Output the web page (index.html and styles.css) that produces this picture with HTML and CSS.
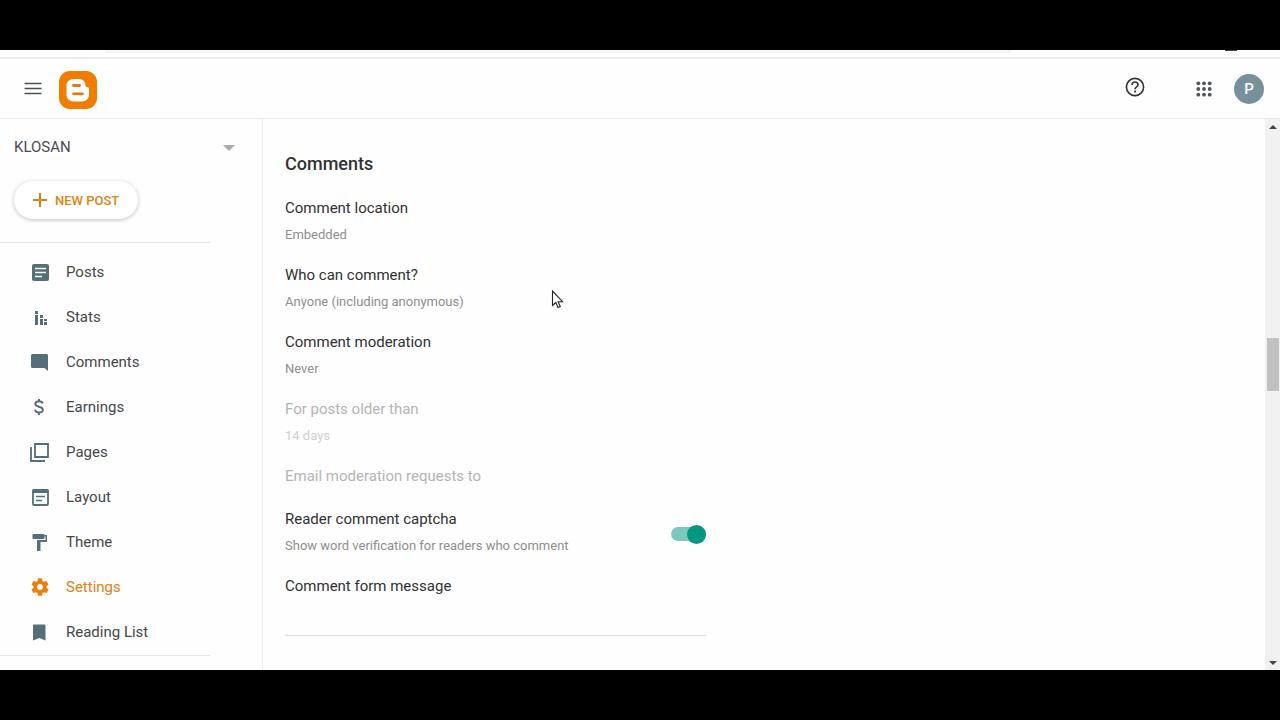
FILE: index.html
```
<!DOCTYPE html>
<html lang="en">
<head>
  <meta charset="UTF-8" />
  <meta name="viewport" content="width=device-width, initial-scale=1" />
  <title>Blogger: Settings</title>
  <link rel="stylesheet" href="styles.css">
</head>
<body>
  <div class="app">
    <div class="browser-edge"><div class="address-bar"></div><div class="profile-dot"></div></div>

    <header class="topbar">
      <button class="icon-btn" aria-label="Main menu">
        <svg width="18" height="14" viewBox="0 0 18 14"><path d="M.5 1.500h17M.5 6.500h17M.5 11.500h17" stroke="#4b5052" stroke-width="1.600"/></svg>
      </button>
      <a class="logo" href="#" aria-label="Blogger">
        <svg width="38" height="38" viewBox="0 0 38 38">
          <rect width="38" height="38" rx="11" fill="#f07c00"/>
          <path d="M14.500 8h5.500c4 0 6.500 3 6.500 6.300 0 1 .6 1.700 1.500 1.700 1.200 0 2 .7 2 1.900v5.600c0 4-3 7-7 7h-8.500c-4 0-7-3-7-7v-8.500c0-4 3-7 7-7z" fill="#fff"/>
          <path d="M14.500 14.500h6M14.500 22.800h9" stroke="#dc7a14" stroke-width="2.800" stroke-linecap="round"/>
        </svg>
      </a>
      <div class="topbar-right">
        <button class="icon-btn help" aria-label="Help">
          <svg width="20" height="20" viewBox="0 0 20 20" fill="none" stroke="#333">
            <circle cx="10" cy="10" r="8.600" stroke-width="1.600"/>
            <path d="M7 8c0-1.900 1.300-3 3-3s3 1.100 3 2.800c0 2-3 2.300-3 4.400" stroke-width="1.600"/>
            <path d="M10 13.600v1.800" stroke-width="1.800"/>
          </svg>
        </button>
        <button class="icon-btn apps" aria-label="Google apps">
          <svg width="16" height="16" viewBox="0 0 16 16" fill="#50565a">
            <circle cx="2.300" cy="2.300" r="1.900"/><circle cx="8" cy="2.300" r="1.900"/><circle cx="13.700" cy="2.300" r="1.900"/>
            <circle cx="2.300" cy="8" r="1.900"/><circle cx="8" cy="8" r="1.900"/><circle cx="13.700" cy="8" r="1.900"/>
            <circle cx="2.300" cy="13.700" r="1.900"/><circle cx="8" cy="13.700" r="1.900"/><circle cx="13.700" cy="13.700" r="1.900"/>
          </svg>
        </button>
        <button class="avatar">P</button>
      </div>
    </header>

    <div class="content">
      <aside class="sidebar">
        <div class="blog-picker">
          <select aria-label="Blog"><option>KLOSAN</option></select>
          <svg width="12" height="8" viewBox="0 0 12 8"><path d="M0 2h12L6 8z" fill="#a9a9a9"/></svg>
        </div>

        <button class="new-post">
          <svg width="14" height="14" viewBox="0 0 14 14"><path d="M7 0v14M0 7h14" stroke="#e08214" stroke-width="2"/></svg>
          NEW POST
        </button>

        <nav class="menu">
          <a href="#">
            <svg viewBox="0 0 24 24"><rect x="4" y="4" width="17" height="17" rx="2"/><path d="M7 8.500h11M7 12.500h11M7 16.500h7" stroke="#fff" stroke-width="1.700"/></svg>
            Posts
          </a>
          <a href="#">
            <svg viewBox="0 0 24 24"><path d="M7 6h3v3H7zM7 10h3v10H7zM12 10h3v3h-3zM12 14h3v6h-3zM16 14h3v2h-3zM16 17h3v3h-3z"/></svg>
            Stats
          </a>
          <a href="#">
            <svg viewBox="0 0 24 24"><path d="M4.500 4h14q1.500 0 1.500 1.500V21l-3.500-3h-12Q3 18 3 16.500v-11Q3 4 4.500 4z"/></svg>
            Comments
          </a>
          <a href="#">
            <svg viewBox="0 0 24 24"><path d="M14.700 8.600C14.400 7 13 6.300 11 6.300c-2.300 0-3.700 1-3.700 2.600 0 3.800 7.600 1.800 7.600 5.800 0 1.800-1.500 2.800-3.900 2.800-2.300 0-3.800-1-4.100-2.900M11 4v2.500M11 17.300V20" fill="none" stroke="#546e7a" stroke-width="1.900"/></svg>
            Earnings
          </a>
          <a href="#">
            <svg viewBox="0 0 24 24"><path d="M7 4h13v13H7zM3 7v14h14" fill="none" stroke="#546e7a" stroke-width="1.800"/></svg>
            Pages
          </a>
          <a href="#">
            <svg viewBox="0 0 24 24"><rect x="5" y="5" width="15" height="15" rx="1" fill="none" stroke="#546e7a" stroke-width="1.800"/><path d="M4.500 4.500h16V8h-16z"/><path d="M8 11.500h9M8 15.500h6" stroke="#546e7a" stroke-width="1.700"/></svg>
            Layout
          </a>
          <a href="#">
            <svg viewBox="0 0 24 24"><path d="M5.500 4h10q1 0 1 1H19v7h-6.500v9H9V10h8.500V6.500h-1V8q0 1-1 1h-10q-1 0-1-1V5q0-1 1-1z"/></svg>
            Theme
          </a>
          <a href="#" class="active">
            <svg viewBox="2 2 20 20" class="gear"><path d="M19.140 12.940c.04-.3.060-.610.060-.940s-.020-.640-.070-.940l2.030-1.580a.49.49 0 0 0 .12-.610l-1.920-3.320a.488.488 0 0 0-.590-.220l-2.390.960a7.030 7.030 0 0 0-1.620-.940l-.360-2.540a.484.484 0 0 0-.480-.410h-3.840c-.24 0-.43.170-.47.410l-.360 2.540c-.59.240-1.130.570-1.620.940l-2.390-.960a.48.48 0 0 0-.590.220L2.740 8.870c-.12.210-.08.470.12.610l2.030 1.580c-.05.300-.09.630-.09.940s.02.640.07.940l-2.030 1.580a.49.49 0 0 0-.12.610l1.920 3.320c.12.220.37.290.59.220l2.390-.96c.5.380 1.030.7 1.620.94l.36 2.540c.05.24.24.41.48.41h3.840c.24 0 .44-.17.47-.41l.36-2.540c.59-.24 1.130-.56 1.620-.94l2.390.96c.22.080.47 0 .59-.22l1.920-3.320a.48.48 0 0 0-.12-.61zM12 15.200a3.200 3.200 0 1 1 0-6.400 3.200 3.200 0 0 1 0 6.400z"/></svg>
            Settings
          </a>
          <a href="#">
            <svg viewBox="0 0 24 24"><path d="M6 4.500h10.500q1 0 1 1V20.500l-6.200-2.600L5 20.500V5.500q0-1 1-1z"/></svg>
            Reading List
          </a>
        </nav>
      </aside>

      <main class="settings">
        <h2>Comments</h2>
        <div class="setting">
          <div class="name">Comment location</div>
          <div class="value">Embedded</div>
        </div>
        <div class="setting">
          <div class="name">Who can comment?</div>
          <div class="value">Anyone (including anonymous)</div>
        </div>
        <div class="setting">
          <div class="name">Comment moderation</div>
          <div class="value">Never</div>
        </div>
        <div class="setting disabled">
          <div class="name">For posts older than</div>
          <div class="value">14 days</div>
        </div>
        <div class="setting disabled">
          <div class="name">Email moderation requests to</div>
        </div>
        <div class="setting with-switch">
          <label for="captcha">
            <span class="name">Reader comment captcha</span>
            <span class="value">Show word verification for readers who comment</span>
          </label>
          <input type="checkbox" id="captcha" class="switch" checked />
        </div>
        <div class="setting">
          <label for="message" class="name">Comment form message</label>
          <textarea id="message" rows="1"></textarea>
        </div>
      </main>

      <div class="scrollbar">
        <svg width="8" height="4" viewBox="0 0 8 4"><path d="M0 4h8L4 0z" fill="#444"/></svg>
        <div class="thumb"></div>
        <svg width="8" height="4" viewBox="0 0 8 4"><path d="M0 0h8L4 4z" fill="#444"/></svg>
      </div>
    </div>

    <svg class="cursor" width="13" height="20" viewBox="0 0 13 20"><path d="M1.500 1v14.500l3.300-3 2.200 5 2.300-1-2.200-4.800h4.500z" fill="#fff" stroke="#222" stroke-width="1.100"/></svg>
  </div>
</body>
</html>
```
FILE: styles.css
```
* {
  box-sizing: border-box;
}
body {
  margin: 0;
  padding: 50px 0;
  min-height: 100vh;
  display: flex;
  background: #000;
  font-family: Roboto, sans-serif;
  font-size: 15px;
  color: #2f3133;
}
button {
  border: none;
  background: none;
  padding: 0;
  font-family: inherit;
  cursor: pointer;
}
svg {
  display: block;
  flex: none;
}
.app {
  flex: 1;
  display: flex;
  flex-direction: column;
  position: relative;
  overflow: hidden;
  background: #fefefe;
}

/* bottom edge of the browser toolbar */
.browser-edge {
  height: 9px;
  display: flex;
  align-items: flex-start;
  justify-content: space-between;
  padding: 0 43px 0 105px;
  border-bottom: 2px solid #ececec;
}
.address-bar {
  width: 80%;
  height: 3px;
  background: #f5f5f5;
}
.profile-dot {
  width: 12px;
  height: 1px;
  background: #444;
}

.topbar {
  height: 60px;
  display: flex;
  align-items: center;
  padding: 0 16px 0 24px;
  border-bottom: 1px solid #e9e9e9;
}
.logo {
  margin-left: 17px;
  padding-top: 2px;
}
.topbar-right {
  margin-left: auto;
  display: flex;
  align-items: center;
}
.help {
  padding-bottom: 3px;
}
.apps {
  margin: 0 22px 0 51px;
}
.avatar {
  width: 30px;
  height: 30px;
  border-radius: 50%;
  background: #78909c;
  color: #fff;
  font-size: 15px;
  font-weight: 500;
}

.content {
  flex: 1;
  display: flex;
}
.sidebar {
  width: 263px;
  flex: none;
  border-right: 1px solid #ebebeb;
}
.blog-picker {
  display: flex;
  align-items: center;
  height: 56px;
  padding: 0 27px 0 14px;
}
.blog-picker select {
  flex: 1;
  appearance: none;
  border: none;
  background: none;
  padding: 0;
  font: inherit;
  color: #4a4c4e;
}
.new-post {
  display: flex;
  align-items: center;
  gap: 8px;
  height: 38px;
  margin: 6px 0 23px 14px;
  padding: 0 19px;
  border-radius: 19px;
  background: #fff;
  box-shadow: 0 1px 4px rgba(0, 0, 0, 0.25);
  font-size: 13px;
  font-weight: 500;
  color: #e08214;
}
.menu {
  width: 210px;
  padding: 6px 0 1px;
  border-top: 1px solid #e6e6e6;
  border-bottom: 1px solid #e6e6e6;
}
.menu a {
  display: flex;
  align-items: center;
  gap: 14px;
  height: 45px;
  padding-left: 28px;
  color: #45484a;
  text-decoration: none;
}
.menu svg {
  width: 24px;
  height: 24px;
  fill: #546e7a;
}
.menu .gear {
  padding: 3px;
  fill: #ee7d0c;
}
.menu .active {
  color: #e08214;
}

.settings {
  flex: 1;
  padding: 32px 0 0 22px;
}
h2 {
  margin: 0 0 18px;
  font-size: 18px;
  font-weight: 500;
  line-height: 26px;
}
.setting {
  max-width: 421px;
  margin-bottom: 17px;
}
.name {
  display: block;
  line-height: 26px;
}
.value {
  display: block;
  margin-top: 4px;
  font-size: 13px;
  line-height: 20px;
  color: #8e8e8e;
}
.disabled .name {
  color: #b4b4b4;
}
.disabled .value {
  color: #cfcfcf;
}
.with-switch {
  display: flex;
  align-items: center;
  justify-content: space-between;
}
.switch {
  appearance: none;
  flex: none;
  display: flex;
  align-items: center;
  justify-content: flex-end;
  width: 35px;
  height: 14px;
  margin: 6px 0 0;
  border-radius: 7px;
  background: #7cc8bd;
}
.switch::before {
  content: "";
  width: 19px;
  height: 19px;
  border-radius: 50%;
  background: #069682;
}
.switch:not(:checked) {
  justify-content: flex-start;
  background: #bbb;
}
textarea {
  display: block;
  width: 100%;
  height: 37px;
  padding: 8px 0;
  border: none;
  border-bottom: 1px solid #dedede;
  background: none;
  font: inherit;
  resize: none;
}

.scrollbar {
  width: 15px;
  display: grid;
  grid-template-rows: 15px 204fr 53fr 264fr 15px;
  place-items: center;
  background: #f1f1f1;
}
.thumb {
  grid-row: 3;
  width: 12px;
  height: 100%;
  background: #c1c1c1;
}
.scrollbar svg:last-child {
  grid-row: 5;
}

.cursor {
  position: absolute;
  left: 551px;
  top: 240px;
}
```
